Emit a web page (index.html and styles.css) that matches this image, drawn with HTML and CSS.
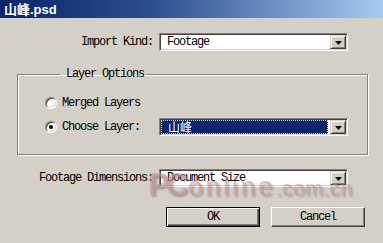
FILE: index.html
```html
<!DOCTYPE html>
<html lang="en">
<head>
    <meta charset="UTF-8">
    <title>山峰.psd</title>
    <link rel="stylesheet" href="styles.css">
</head>
<body>
    <div class="dialog">
        <div class="titlebar">山峰.psd</div>

        <div class="field-row row-kind">
            <span class="field-label">Import Kind:</span>
            <div class="combo">
                <span class="combo-value">Footage</span>
                <span class="combo-btn"><svg class="arrow" width="7" height="4" viewBox="0 0 7 4"><polygon points="0,0 7,0 3.5,4"/></svg></span>
            </div>
        </div>

        <fieldset class="group">
            <legend>Layer Options</legend>
            <div class="radio-row">
                <span class="radio"></span>
                <span class="radio-label">Merged Layers</span>
            </div>
            <div class="radio-row second">
                <span class="radio checked"></span>
                <span class="radio-label fixed">Choose Layer:</span>
                <div class="combo">
                    <span class="combo-value focused">山峰</span>
                    <span class="combo-btn"><svg class="arrow" width="7" height="4" viewBox="0 0 7 4"><polygon points="0,0 7,0 3.5,4"/></svg></span>
                </div>
            </div>
        </fieldset>

        <div class="field-row row-dims">
            <span class="field-label">Footage Dimensions:</span>
            <div class="combo">
                <span class="combo-value">Document Size</span>
                <span class="combo-btn"><svg class="arrow" width="7" height="4" viewBox="0 0 7 4"><polygon points="0,0 7,0 3.5,4"/></svg></span>
            </div>
        </div>

        <div class="buttons">
            <button class="btn btn-default">OK</button>
            <button class="btn">Cancel</button>
        </div>

        <!-- site watermark over the screenshot -->
        <div class="watermark"><span class="wm-pc">PC</span><span class="wm-online">online</span><span class="wm-domain">.com.cn</span></div>
    </div>
</body>
</html>
```

FILE: styles.css
```css
body {
    margin: 0;
    background: #d4d0c8;
    font-family: "Liberation Mono", "Courier New", Courier, monospace;
    font-size: 12px;
    letter-spacing: -1.2px;
    color: #000;
}
.dialog {
    position: relative;
    width: 383px;
    height: 243px;
    overflow: hidden;
    background: #d4d0c8;
}
.titlebar {
    height: 18px;
    line-height: 19px;
    padding-left: 4px;
    background: linear-gradient(to right, #0a246a, #2c4f90 40%, #a6caf0);
    color: #fff;
    font-family: "Liberation Sans", "Noto Sans CJK SC", sans-serif;
    font-size: 13px;
    font-weight: bold;
    letter-spacing: 0;
}
.field-row {
    display: grid;
    grid-template-columns: 153px 189px;
    column-gap: 6px;
    align-items: center;
}
.field-label {
    text-align: right;
}
.row-kind {
    margin-top: 15px;
}
.row-dims {
    margin-top: 14px;
}
.combo {
    box-sizing: border-box;
    display: flex;
    align-items: center;
    width: 189px;
    height: 18px;
    background: #fff;
    border: 1px solid;
    border-color: #808080 #fff #fff #808080;
    box-shadow: inset 1px 1px #404040, inset -1px -1px #d4d0c8;
}
.combo-value {
    flex: 1;
    padding-left: 7px;
    line-height: 14px;
}
.combo-value.focused {
    box-sizing: border-box;
    height: 14px;
    margin: 0 2px 0 1px;
    padding-left: 6px;
    background: #0a246a;
    border: 1px dotted #e8d890;
    color: #fff;
    font-family: "Noto Sans CJK SC", sans-serif;
    font-size: 12px;
    line-height: 12px;
    letter-spacing: 0;
}
.combo-btn {
    box-sizing: border-box;
    display: flex;
    align-items: center;
    justify-content: center;
    width: 16px;
    height: 14px;
    margin-right: 1px;
    background: #d4d0c8;
    border: 1px solid;
    border-color: #d4d0c8 #404040 #404040 #d4d0c8;
    box-shadow: inset 1px 1px #fff, inset -1px -1px #808080;
}
.arrow {
    display: block;
    margin-top: 1px;
    fill: #000;
}
.group {
    box-sizing: border-box;
    width: 351px;
    margin: 16px 0 0 17px;
    padding: 13px 0 18px 27px;
    border: 1px solid #808080;
    box-shadow: 1px 1px #fff, inset 1px 1px #fff;
    min-width: 0;
}
.group legend {
    margin-left: 15px;
    padding: 0 2px 0 6px;
    line-height: 14px;
}
.radio-row {
    display: flex;
    align-items: center;
    height: 18px;
}
.radio-row.second {
    margin-top: 6px;
}
.radio {
    box-sizing: border-box;
    display: flex;
    align-items: center;
    justify-content: center;
    width: 12px;
    height: 12px;
    margin-right: 5px;
    border-radius: 50%;
    background: #fff;
    border: 1px solid;
    border-color: #808080 #fff #fff #808080;
    box-shadow: inset 1px 1px #404040, inset -1px -1px #d4d0c8;
}
.radio.checked::after {
    content: "";
    width: 4px;
    height: 4px;
    border-radius: 50%;
    background: #000;
}
.radio-label.fixed {
    width: 97px;
}
.buttons {
    display: flex;
    justify-content: flex-end;
    gap: 11px;
    margin-top: 20px;
    padding-right: 18px;
}
.btn {
    box-sizing: border-box;
    width: 94px;
    height: 20px;
    padding: 0;
    background: #d4d0c8;
    font-family: "Liberation Mono", "Courier New", Courier, monospace;
    font-size: 12px;
    letter-spacing: -1.2px;
    color: #000;
    border: 1px solid;
    border-color: #fff #404040 #404040 #fff;
    box-shadow: inset -1px -1px #808080, inset 1px 1px #d4d0c8;
}
.btn-default {
    border: 1px solid #000;
    box-shadow: inset 1px 1px #fff, inset -1px -1px #404040, inset -2px -2px #808080;
}
.watermark {
    position: absolute;
    left: 148px;
    top: 167px;
    white-space: nowrap;
    font-family: "Liberation Sans", sans-serif;
    letter-spacing: 0;
    color: rgba(205, 150, 150, 0.6);
    text-shadow: 2px 2px 2px rgba(80, 80, 80, 0.4);
    pointer-events: none;
}
.wm-pc {
    font-size: 31px;
    font-weight: bold;
    letter-spacing: -3px;
}
.wm-online {
    font-size: 26px;
    letter-spacing: 3px;
    margin-left: 3px;
}
.wm-domain {
    font-size: 21px;
    letter-spacing: 0.5px;
}
```
